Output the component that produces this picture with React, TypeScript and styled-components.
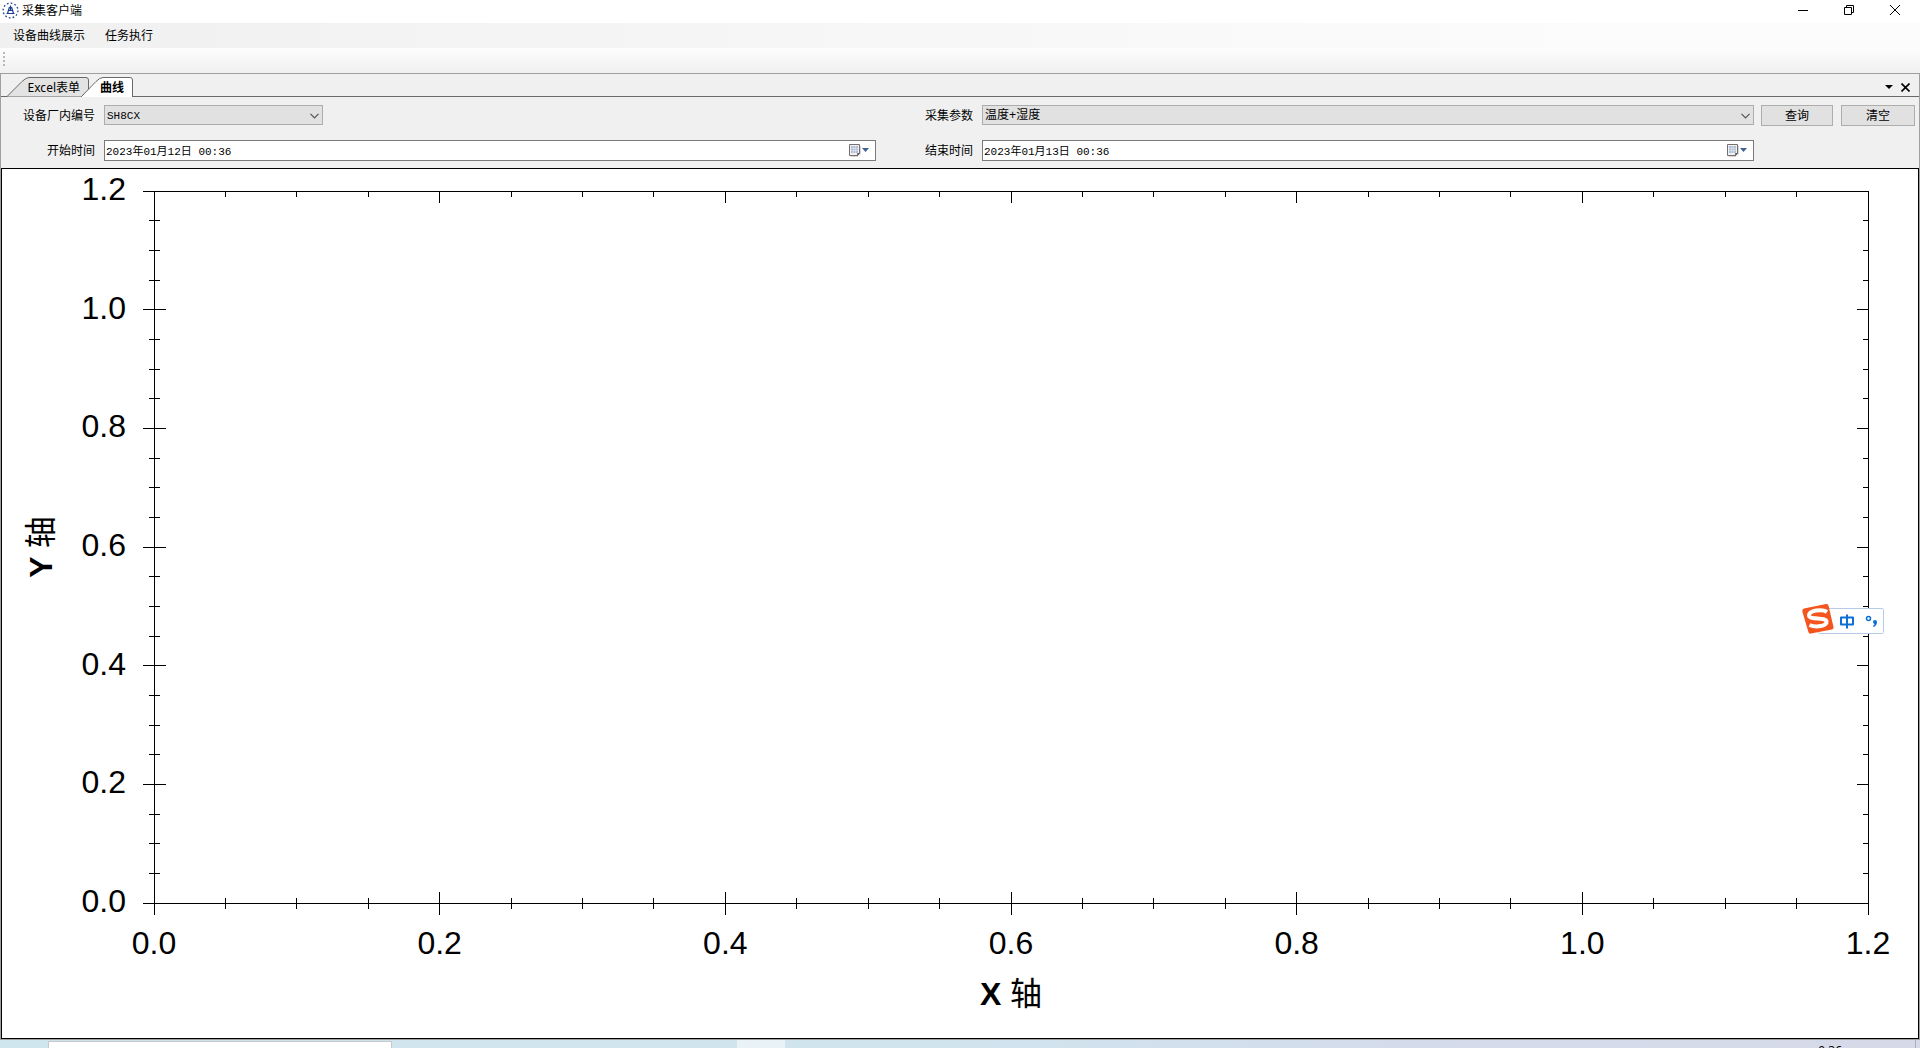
import React from "react";
import styled, { createGlobalStyle } from "styled-components";

const uiFont = `"Noto Sans", "Noto Sans CJK SC", sans-serif`;
const monoFont = `"Liberation Mono", "Noto Sans CJK SC", monospace`;
const chartFont = `"Liberation Sans", "Noto Sans CJK SC", sans-serif`;

const GlobalStyle = createGlobalStyle`
  *, *::before, *::after { box-sizing: border-box; }
  body { margin: 0; font: 12px/16px ${uiFont}; color: #000; background: #f0f0f0; overflow: hidden; }
  button, input, select { font: inherit; color: inherit; margin: 0; border-radius: 0; }
`;

const Screen = styled.div`
  display: flex;
  flex-direction: column;
  height: 100vh;
`;

const TitleBar = styled.header`
  display: flex;
  align-items: flex-start;
  height: 23px;
  padding: 2px 2px 0;
  background: #fff;
`;

const Title = styled.h1`
  flex: 1;
  margin: 0 0 0 3px;
  font-size: 12px;
  font-weight: 400;
  line-height: 18px;
`;

const CaptionButton = styled.button`
  display: flex;
  align-items: center;
  justify-content: center;
  width: 46px;
  height: 16px;
  padding: 0;
  border: 0;
  background: transparent;
`;

const MenuBar = styled.nav`
  display: flex;
  align-items: center;
  gap: 20px;
  height: 25px;
  padding-left: 13px;
  background: linear-gradient(90deg, #f0f0f0, #fcfcfc 85%);
`;

const MenuItem = styled.button`
  padding: 0;
  border: 0;
  background: transparent;
`;

const ToolStrip = styled.div`
  display: flex;
  align-items: flex-start;
  height: 26px;
  padding: 4px 0 0 3px;
  border-bottom: 1px solid #a0a0a0;
  background: linear-gradient(#fdfdfd, #f0f0f0);
`;

const Grip = styled.div`
  width: 2px;
  height: 14px;
  background: repeating-linear-gradient(#b8b8b8 0 2px, transparent 2px 4px);
`;

const Body = styled.main`
  display: flex;
  flex: 1;
  flex-direction: column;
  min-height: 0;
  border: solid #a0a0a0;
  border-width: 0 1px 1px;
`;

const TabStrip = styled.div`
  display: flex;
  align-items: flex-end;
  height: 23px;
  padding-left: 5px;
  box-shadow: inset 0 -1px #696969;
`;

const Tab = styled.button<{ $active?: boolean }>`
  position: relative;
  z-index: ${(p) => (p.$active ? 1 : 0)};
  width: ${(p) => (p.$active ? 52 : 84)}px;
  height: 20px;
  margin-right: ${(p) => (p.$active ? 0 : -9)}px;
  padding: 2px ${(p) => (p.$active ? 9 : 10)}px 0 0;
  border: 0;
  background: transparent;
  font-weight: ${(p) => (p.$active ? 700 : 400)};
  text-align: right;
`;

const TabShape = styled.svg`
  position: absolute;
  inset: 0;
  z-index: -1;
`;

const TabTools = styled.div`
  display: flex;
  align-self: flex-end;
  gap: 4px;
  margin-left: auto;
  padding: 0 8px 2px 0;
`;

const IconButton = styled.button`
  display: flex;
  align-items: center;
  justify-content: center;
  width: 12px;
  height: 16px;
  padding: 0;
  border: 0;
  background: transparent;
`;

const Filters = styled.form`
  display: grid;
  grid-template-columns: 103px 1fr 106px 1fr 161px;
  grid-template-rows: 21px 21px;
  row-gap: 14px;
  height: 71px;
  padding: 8px 4px 0 0;
`;

const FieldLabel = styled.label`
  align-self: center;
  padding-right: 9px;
  text-align: right;
  white-space: nowrap;
`;

const SelectBox = styled.div<{ $width: string }>`
  position: relative;
  width: ${(p) => p.$width};
  height: 20px;
`;

const Select = styled.select<{ $code?: boolean }>`
  appearance: none;
  display: block;
  width: 100%;
  height: 20px;
  padding: 2px 20px 0 2px;
  border: 1px solid #adadad;
  background: #e1e1e1;
  font-family: ${monoFont};
  font-size: ${(p) => (p.$code ? 11 : 12)}px;
  line-height: 16px;
`;

const Chevron = styled.svg`
  position: absolute;
  top: 8px;
  right: 4px;
  pointer-events: none;
`;

const DateBox = styled.div`
  display: flex;
  align-items: flex-start;
  height: 21px;
  padding-right: 5px;
  border: 1px solid #7a7a7a;
  background: #fff;
`;

const DateInput = styled.input`
  flex: 1;
  min-width: 0;
  height: 18px;
  padding: 0 1px;
  border: 0;
  outline: 0;
  background: transparent;
  font-family: ${monoFont};
  font-size: 11px;
`;

const CalendarButton = styled(IconButton)`
  width: 22px;
  height: 19px;
`;

const Actions = styled.div`
  display: grid;
  grid-template-columns: 72px 74px;
  gap: 8px;
  padding-left: 7px;
`;

const PushButton = styled.button`
  height: 21px;
  padding: 0;
  border: 1px solid #adadad;
  background: #e1e1e1;
`;

const ChartPanel = styled.section`
  flex: 1;
  min-height: 0;
  padding: 22px 50px 135px 152px;
  border: 1px solid #000;
  background: #fff;
`;

const Plot = styled.svg`
  display: block;
  width: 100%;
  height: 100%;
  overflow: visible;
  font-family: ${chartFont};
  font-size: 32px;

  svg { overflow: visible; }
  line { stroke: #000; stroke-width: 1px; shape-rendering: crispEdges; }
`;

const ImeBar = styled.aside`
  position: fixed;
  right: 36px;
  top: 603px;
  display: flex;
  align-items: center;
  width: 82px;
  height: 32px;
`;

const TaskBar = styled.footer`
  display: flex;
  height: 8px;
  overflow: hidden;
  background: linear-gradient(90deg, #d0e6ee, #d0e4ee 50%, #d4dbea 75%, #d6dae8);
`;

const SearchSlot = styled.div`
  width: 344px;
  margin: 1px 0 0 48px;
  border: solid #c8c8c8;
  border-width: 1px 1px 0;
  background: #fff;
`;

const ActiveTask = styled.div`
  width: 48px;
  margin-left: 345px;
  background: #e9f3f7;
`;

const Clock = styled.time`
  margin: 3px 73px 0 auto;
`;

const DesktopEdge = styled.div`
  width: 5px;
  border-left: 1px solid #a9afba;
`;

const STEPS = Array.from({ length: 25 }, (_, i) => i);

function Ticks() {
  return (
    <>
      {STEPS.map((i) => {
        const major = i % 4 === 0;
        const size = major ? 11 : 5;
        const at = `${(i / 24) * 100}%`;
        const up = `${100 - (i / 24) * 100}%`;
        const value = (i / 20).toFixed(1);
        return (
          <React.Fragment key={i}>
            <svg x={at} y="100%">
              <line y1={-size} y2={size + 1} />
              {major && <text y="51" textAnchor="middle">{value}</text>}
            </svg>
            <svg x={at} y="0">
              <line y1="0" y2={size + 1} />
            </svg>
            <svg x="0" y={up}>
              <line x1={-size} x2={size + 1} />
              {major && <text x="-28" y="9" textAnchor="end">{value}</text>}
            </svg>
            <svg x="100%" y={up}>
              <line x1={-size} x2="0" />
            </svg>
          </React.Fragment>
        );
      })}
    </>
  );
}

function Chart() {
  return (
    <ChartPanel>
      <Plot role="img" aria-label="曲线">
        <line x1="0" y1="0" x2="100%" y2="0" />
        <line x1="0" y1="100%" x2="100%" y2="100%" />
        <line x1="0" y1="0" x2="0" y2="100%" />
        <line x1="100%" y1="0" x2="100%" y2="100%" />
        <Ticks />
        <svg x="50%" y="100%">
          <text y="102" textAnchor="middle">
            <tspan fontWeight="700">X </tspan>轴
          </text>
        </svg>
        <svg x="0" y="50%">
          <text transform="translate(-102 0) rotate(-90)" textAnchor="middle">
            <tspan fontWeight="700">Y </tspan>轴
          </text>
        </svg>
      </Plot>
    </ChartPanel>
  );
}

function AppLogo() {
  return (
    <svg width="17" height="17" viewBox="0 0 17 17" fill="none" stroke="#1c3f94">
      <circle cx="8.5" cy="8.5" r="7.4" strokeWidth="1.3" strokeDasharray="1.7 2.17" />
      <path d="M8.5 3.500v5M7.5 5 5.500 11.500M9.5 5 11.500 11.500M6 8.5h5M4.500 11.5h8" strokeWidth="1.2" />
    </svg>
  );
}

type DropDownProps = { id: string; value: string; width: string; code?: boolean };

function DropDown({ id, value, width, code }: DropDownProps) {
  return (
    <SelectBox $width={width}>
      <Select id={id} defaultValue={value} $code={code}>
        <option>{value}</option>
      </Select>
      <Chevron width="9" height="6" fill="none" stroke="#555" strokeWidth="1.2">
        <path d="M.5.8 4.5 4.8 8.5.8" />
      </Chevron>
    </SelectBox>
  );
}

function DatePicker({ id, value }: { id: string; value: string }) {
  return (
    <DateBox>
      <DateInput id={id} defaultValue={value} />
      <CalendarButton type="button" aria-label="选择日期">
        <svg width="20" height="13">
          <path d="M1.500 12.500h7.500l2.500-2.500V2" fill="none" stroke="#d5d5d5" />
          <path d="M.5.5h10v9l-2 2h-8z" fill="#eef1f6" stroke="#796e6e" />
          <path d="M10.5 9.5h-2v2z" fill="#6b6262" stroke="#6b6262" />
          <path d="M2 2h7v7H2z" fill="#b3bfd2" />
          <path d="M4.5 2v7M6.5 2v7M2 4.5h7M2 6.5h7" stroke="#e8edf5" strokeWidth=".5" />
          <path d="M13 4h7l-3.500 4z" fill="#3f5f95" />
        </svg>
      </CalendarButton>
    </DateBox>
  );
}

function Ime() {
  return (
    <ImeBar aria-label="输入法">
      <svg width="82" height="32">
        <rect x="16.500" y="5.500" width="65" height="25" rx="1" fill="#fff" stroke="#b5cbe6" />
        <path d="M2 5.500 24 1.100q2-.4 2.500 1.500L31.500 24q.4 2-1.500 2.500L9 30.600q-2 .4-2.600-1.500L.3 8.500Q0 6 2 5.500z" fill="#f4551e" />
        <path d="M25 9C20 5.500 7 7.500 7 12.500c0 4.500 17 1.500 17.500 6 .4 4.500-10 6.500-17 3.500" fill="none" stroke="#fff" strokeWidth="4" />
        <path d="M39 14.500h12v7H39zM45 11.500v14" fill="none" stroke="#0b6fd6" strokeWidth="2" strokeLinejoin="round" />
        <circle cx="66.500" cy="15.500" r="2" fill="none" stroke="#0b6fd6" strokeWidth="1.500" />
        <path d="M71 19a2 2 0 1 1 4 0q0 3.500-3.500 5l-.5-1q1.500-1 1.500-2Q71 20.500 71 19z" fill="#0b6fd6" />
      </svg>
    </ImeBar>
  );
}

export default function App() {
  return (
    <>
      <GlobalStyle />
      <Screen>
        <TitleBar>
          <AppLogo />
          <Title>采集客户端</Title>
          <CaptionButton aria-label="最小化">
            <svg width="10" height="10" stroke="#000"><path d="M0 5.500h10" /></svg>
          </CaptionButton>
          <CaptionButton aria-label="还原">
            <svg width="10" height="10" fill="none" stroke="#000"><path d="M.5 2.500h7v7h-7zM2.500 2.500v-2h7v7h-2" /></svg>
          </CaptionButton>
          <CaptionButton aria-label="关闭">
            <svg width="10" height="10" stroke="#000"><path d="M0 0 10 10M10 0 0 10" /></svg>
          </CaptionButton>
        </TitleBar>
        <MenuBar>
          <MenuItem>设备曲线展示</MenuItem>
          <MenuItem>任务执行</MenuItem>
        </MenuBar>
        <ToolStrip><Grip /></ToolStrip>
        <Body>
          <TabStrip role="tablist">
            <Tab role="tab" aria-selected="false">
              <TabShape width="84" height="20">
                <path d="M1 19.500 16 4.500Q20 .5 23 .5H80q2.500 0 2.500 2.500v16.500" fill="#e3e3e3" stroke="#696969" />
              </TabShape>
              Excel表单
            </Tab>
            <Tab role="tab" aria-selected="true" $active>
              <TabShape width="52" height="20">
                <path d="M0 20 15 4.500Q19 .5 22 .5H49q2.500 0 2.500 2.500V20" fill="#fff" stroke="#696969" />
              </TabShape>
              曲线
            </Tab>
            <TabTools>
              <IconButton aria-label="标签列表">
                <svg width="8" height="4"><path d="M0 0h8L4 4z" /></svg>
              </IconButton>
              <IconButton aria-label="关闭标签">
                <svg width="9" height="9" stroke="#000" strokeWidth="1.600"><path d="M.5.5 8.500 8.500M8.500.5.5 8.500" /></svg>
              </IconButton>
            </TabTools>
          </TabStrip>
          <Filters onSubmit={(e) => e.preventDefault()}>
            <FieldLabel htmlFor="device">设备厂内编号</FieldLabel>
            <DropDown id="device" value="SH8CX" width="219px" code />
            <FieldLabel htmlFor="param">采集参数</FieldLabel>
            <DropDown id="param" value="温度+湿度" width="100%" />
            <Actions>
              <PushButton type="button">查询</PushButton>
              <PushButton type="reset">清空</PushButton>
            </Actions>
            <FieldLabel htmlFor="start">开始时间</FieldLabel>
            <DatePicker id="start" value="2023年01月12日 00:36" />
            <FieldLabel htmlFor="end">结束时间</FieldLabel>
            <DatePicker id="end" value="2023年01月13日 00:36" />
          </Filters>
          <Chart />
        </Body>
        <TaskBar>
          <SearchSlot />
          <ActiveTask />
          <Clock>0:36</Clock>
          <DesktopEdge />
        </TaskBar>
      </Screen>
      <Ime />
    </>
  );
}
